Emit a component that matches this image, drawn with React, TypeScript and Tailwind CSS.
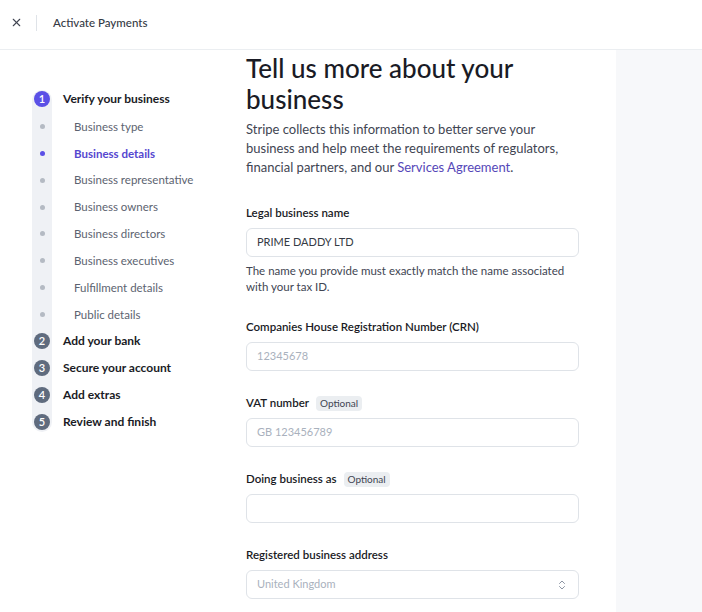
import { X, ChevronsUpDown } from 'lucide-react';

const steps = [
  { kind: 'step', n: 1, label: 'Verify your business', active: true },
  { kind: 'sub', label: 'Business type' },
  { kind: 'sub', label: 'Business details', active: true },
  { kind: 'sub', label: 'Business representative' },
  { kind: 'sub', label: 'Business owners' },
  { kind: 'sub', label: 'Business directors' },
  { kind: 'sub', label: 'Business executives' },
  { kind: 'sub', label: 'Fulfillment details' },
  { kind: 'sub', label: 'Public details' },
  { kind: 'step', n: 2, label: 'Add your bank' },
  { kind: 'step', n: 3, label: 'Secure your account' },
  { kind: 'step', n: 4, label: 'Add extras' },
  { kind: 'step', n: 5, label: 'Review and finish' },
];

function Optional() {
  return (
    <span className="ml-[7px] rounded bg-[#ebeef1] px-[4px] py-px text-[10px] font-normal leading-[13px] text-[#414552]">
      Optional
    </span>
  );
}

function Field({
  label,
  optional,
  value,
  placeholder,
  select,
  help,
}: {
  label: string;
  optional?: boolean;
  value?: string;
  placeholder?: string;
  select?: boolean;
  help?: string;
}) {
  return (
    <div className="mb-[23px]">
      <div className="mb-[6px] flex items-center text-[11.5px] font-semibold leading-[18px] text-[#1a1b25]">
        {label}
        {optional && <Optional />}
      </div>
      <div className="flex h-[29px] w-[333px] items-center justify-between rounded-md border border-[#dfe3e8] bg-white px-[10px] text-[11px]">
        {value ? (
          <span className="text-[#353a44]">{value}</span>
        ) : (
          <span className="text-[#a9b1bd]">{placeholder}</span>
        )}
        {select && <ChevronsUpDown className="h-3 w-3 text-[#8c95a3]" strokeWidth={2} />}
      </div>
      {help && (
        <p className="mb-[3px] mt-[6px] w-[340px] text-[11.5px] leading-[16px] text-[#414552]">{help}</p>
      )}
    </div>
  );
}

export default function App() {
  return (
    <div
      className="h-[612px] w-[702px] overflow-hidden bg-white"
      style={{ fontFamily: 'Lato, "Open Sans", sans-serif' }}
    >
      <header className="flex h-[50px] items-center border-b border-[#ebeef1] pb-[4px] pl-[10px]">
        <X className="h-[13px] w-[13px] text-[#414552]" strokeWidth={2} />
        <div className="ml-[13px] h-[16px] w-px bg-[#dfe3e8]" />
        <span className="ml-[16px] text-[11.5px] font-medium text-[#353a44]">Activate Payments</span>
      </header>

      <div className="flex h-[562px]">
        <aside className="w-[246px] pl-[32px] pt-[36px]">
          <div className="relative">
            <div className="absolute bottom-[4px] left-0 top-[4px] w-[20px] rounded-full bg-[#eff1f5]" />
            {steps.map((s, i) => (
              <div key={i} className="relative flex h-[26.9px] items-center">
                <div className="flex w-[20px] justify-center">
                  {s.kind === 'step' ? (
                    <div
                      className={`flex h-[16px] w-[16px] items-center justify-center rounded-full text-[11px] font-semibold text-white ${
                        s.active ? 'bg-[#5b50e6]' : 'bg-[#5f6b7e]'
                      }`}
                    >
                      {s.n}
                    </div>
                  ) : (
                    <div
                      className={`h-[5px] w-[5px] rounded-full ${s.active ? 'bg-[#5b50e6]' : 'bg-[#b4bac3]'}`}
                    />
                  )}
                </div>
                {s.kind === 'step' ? (
                  <span className="ml-[11px] text-[12px] font-bold text-[#1a1b25]">{s.label}</span>
                ) : (
                  <span
                    className={`ml-[22px] text-[11.5px] ${
                      s.active ? 'font-bold text-[#5547d0]' : 'text-[#5c6370]'
                    }`}
                  >
                    {s.label}
                  </span>
                )}
              </div>
            ))}
          </div>
        </aside>

        <main className="w-[370px] pt-[3px]">
          <h1 className="w-[340px] text-[26px] font-medium leading-[31px] text-[#1a1b25]">
            Tell us more about your business
          </h1>
          <p className="mt-[5px] w-[330px] text-[13px] leading-[19px] text-[#414552]">
            Stripe collects this information to better serve your business and help meet the
            requirements of regulators, financial partners, and our{' '}
            <span className="text-[#5547b8]">Services Agreement</span>.
          </p>

          <div className="mt-[27px]">
            <Field
              label="Legal business name"
              value="PRIME DADDY LTD"
              help="The name you provide must exactly match the name associated with your tax ID."
            />
            <Field label="Companies House Registration Number (CRN)" placeholder="12345678" />
            <Field label="VAT number" optional placeholder="GB 123456789" />
            <Field label="Doing business as" optional />
            <Field label="Registered business address" placeholder="United Kingdom" select />
          </div>
        </main>

        <div className="flex-1 bg-[#f7f8fa]" />
      </div>
    </div>
  );
}
